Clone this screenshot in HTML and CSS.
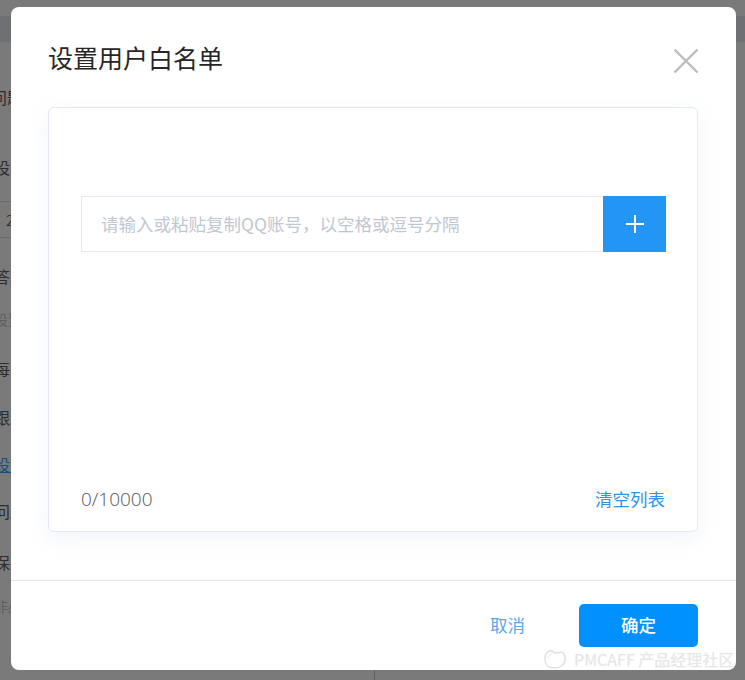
FILE: index.html
```html
<!DOCTYPE html>
<html lang="zh">
<head>
<meta charset="utf-8">
<title>设置用户白名单</title>
<link rel="stylesheet" href="styles.css">
</head>
<body>
<div class="page">
  <div class="topbar"></div>
  <div class="side">
    <div class="row h-a">问题</div>
    <div class="row h-b line">设置</div>
    <div class="row h-c line num">2</div>
    <div class="row h-d">答案</div>
    <div class="row h-e muted">设置</div>
    <div class="row h-f">每日</div>
    <div class="row h-g">跟进</div>
    <div class="row h-h link">设置</div>
    <div class="row h-g">问题</div>
    <div class="row h-j">保存</div>
    <div class="row h-k muted">非必填</div>
  </div>
  <div class="vline"></div>
</div>
<div class="modal">
  <header class="modal-head">
    <h1 class="modal-title">设置用户白名单</h1>
    <svg class="close" viewBox="0 0 26 26" width="26" height="26"><path d="M1.5 1.5 24.5 24.5M24.5 1.5 1.5 24.5" fill="none" stroke="#bdbdbd" stroke-width="2.4"/></svg>
  </header>
  <section class="card">
    <div class="input-row">
      <div class="input">请输入或粘贴复制QQ账号，以空格或逗号分隔</div>
      <div class="add"><svg viewBox="0 0 18 18" width="18" height="18"><path d="M9 0V18M0 9H18" stroke="#fff" stroke-width="2"/></svg></div>
    </div>
    <div class="card-foot">
      <span class="count">0/10000</span>
      <span class="clear">清空列表</span>
    </div>
  </section>
  <footer class="modal-foot">
    <span class="cancel">取消</span>
    <span class="ok">确定</span>
  </footer>
</div>
<div class="watermark">
  <svg viewBox="0 0 24 22" width="24" height="22"><path d="M12 5C8 1 2 3 2 11s5 9 10 9 10-3 10-9c0-3-1-6-3-7-3 1-5 1-7 1Z" fill="#fff" stroke="#e2e2e2" stroke-width="1.6"/><path d="M5 11c0-3 2-5 4-5" fill="none" stroke="#ececec" stroke-width="1.4"/></svg>
  <span>PMCAFF 产品经理社区</span>
</div>
</body>
</html>
```
FILE: styles.css
```css
* { box-sizing: border-box; }
html, body { margin: 0; height: 100%; }
body {
  width: 745px;
  height: 680px;
  overflow: hidden;
  background: #7a7a7a;
  font-family: "Noto Sans CJK SC", "Liberation Sans", sans-serif;
  position: relative;
}
.page { height: 680px; overflow: hidden; position: relative; }
.topbar { height: 26px; margin-top: 16px; background: #6f7073; }
.side { margin-left: -6px; width: 360px; color: #2c2c2c; font-size: 16px; }
.row { display: flex; align-items: center; }
.line { border-bottom: 1px solid #6a6a6a; }
.num { color: #333; font-size: 14px; padding-left: 12px; }
.muted { color: #5e5e5e; font-size: 14px; }
.link { color: #124f80; text-decoration: underline; }
.h-a { height: 110px; margin-left: -3px; }
.h-b { height: 50px; padding-bottom: 19px; }
.h-c { height: 36px; }
.h-d { height: 62px; padding-top: 14px; }
.h-e { height: 40px; padding-bottom: 2px; }
.h-f { height: 58px; padding-bottom: 2px; }
.h-g { height: 40px; padding-bottom: 2px; }
.h-h { height: 54px; padding-bottom: 2px; }
.h-j { height: 62px; padding-bottom: 2px; }
.h-k { height: 26px; padding-bottom: 2px; }
.vline { position: absolute; left: 374px; top: 560px; width: 1px; height: 120px; background: #5e5e5e; }

.modal {
  position: absolute;
  left: 11px;
  top: 7px;
  width: 725px;
  height: 663px;
  background: #fff;
  border-radius: 8px;
  display: flex;
  flex-direction: column;
}
.modal-head {
  height: 100px;
  padding: 0 38px 0 37px;
  display: flex;
  align-items: flex-start;
  justify-content: space-between;
}
.modal-title {
  margin: 31px 0 0;
  font-size: 25px;
  line-height: 38px;
  font-weight: 400;
  color: #262626;
}
.close { margin-top: 41px; margin-right: -1px; }
.card {
  margin: 0 38px 0 37px;
  height: 425px;
  border: 1px solid #e4e8f3;
  border-radius: 6px;
  background: #fff;
  box-shadow: 0 6px 20px rgba(200, 210, 235, 0.25);
  padding: 88px 31px 0 32px;
  display: flex;
  flex-direction: column;
  justify-content: space-between;
}
.input-row { display: flex; height: 56px; }
.input {
  flex: 1;
  border: 1px solid #e4e8f1;
  border-right: 0;
  padding: 0 0 2px 19px;
  display: flex;
  align-items: center;
  font-size: 17.5px;
  color: #c0c7d1;
}
.add {
  width: 63px;
  background: #2396f5;
  display: flex;
  align-items: center;
  justify-content: center;
}
.card-foot {
  display: flex;
  justify-content: space-between;
  align-items: center;
  height: 30px;
  margin-bottom: 17px;
  font-size: 17.5px;
}
.count { color: #555; font-size: 19px; font-weight: 300; font-family: "Open Sans", "Noto Sans CJK SC", sans-serif; }
.clear { color: #2d93e6; margin: 0 1px 2px 0; }
.modal-foot {
  margin-top: 48px;
  flex: 1;
  border-top: 1px solid #e4e4f3;
  padding: 23px 38px 0 0;
  display: flex;
  justify-content: flex-end;
  align-items: flex-start;
}
.cancel {
  height: 43px;
  line-height: 41px;
  font-size: 17.5px;
  color: #5aa7e8;
  margin-right: 54px;
}
.ok {
  width: 119px;
  height: 43px;
  line-height: 42px;
  text-align: center;
  background: #0090ff;
  color: #fff;
  border-radius: 5px;
  font-size: 17.5px;
  font-weight: 500;
}
.watermark {
  position: absolute;
  left: 543px;
  top: 648px;
  display: flex;
  align-items: center;
  gap: 7px;
  color: #e6e6e6;
  font-size: 16px;
  line-height: 22px;
  white-space: nowrap;
  text-shadow: 0 0 2px #f4f4f4;
}
```
